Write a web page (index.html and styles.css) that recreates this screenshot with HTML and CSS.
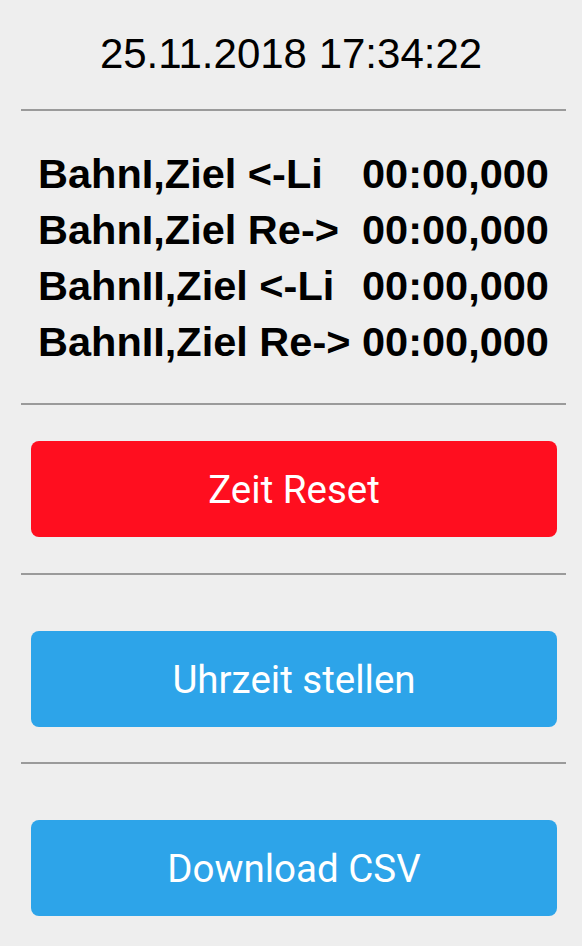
FILE: index.html
```html
<!DOCTYPE html>
<html lang="de">
<head>
<meta charset="utf-8">
<title>Zeitmessung</title>
<link rel="stylesheet" href="styles.css">
</head>
<body>
<main class="page">
  <h1 class="clock">25.11.2018 17:34:22</h1>
  <hr class="rule rule-top">
  <div class="times">
    <div class="label">BahnI,Ziel &lt;-Li</div><div class="value">00:00,000</div>
    <div class="label">BahnI,Ziel Re-&gt;</div><div class="value">00:00,000</div>
    <div class="label">BahnII,Ziel &lt;-Li</div><div class="value">00:00,000</div>
    <div class="label">BahnII,Ziel Re-&gt;</div><div class="value">00:00,000</div>
  </div>
  <hr class="rule rule-times">
  <button class="btn btn-red btn-first">Zeit Reset</button>
  <hr class="rule rule-btn">
  <button class="btn btn-blue">Uhrzeit stellen</button>
  <hr class="rule rule-btn">
  <button class="btn btn-blue">Download CSV</button>
</main>
</body>
</html>
```

FILE: styles.css
```css
html, body {
  margin: 0;
  padding: 0;
  background: #eeeeee;
}

.page {
  display: flex;
  flex-direction: column;
  font-family: "Liberation Sans", Arial, Helvetica, sans-serif;
  color: #000;
}

.clock {
  margin: 29px 0 0 0;
  font-size: 42px;
  font-weight: normal;
  line-height: 50px;
  text-align: center;
}

.rule {
  margin: 0 16px 0 21px;
  border: 0;
  border-top: 2px solid #9a9a9a;
  height: 0;
}

.rule-top {
  margin-top: 30px;
}

.times {
  margin-top: 35px;
  padding-left: 38px;
  display: grid;
  grid-template-columns: 324px auto;
  font-size: 41.5px;
  font-weight: bold;
  line-height: 56px;
  white-space: nowrap;
}

.rule-times {
  margin-top: 33px;
}

.btn {
  margin: 0 25px 0 31px;
  height: 96px;
  border: 0;
  border-radius: 8px;
  color: #fff;
  font-family: Roboto, "Liberation Sans", sans-serif;
  font-size: 38.5px;
  font-weight: normal;
  padding: 0;
}

.btn-red {
  background: #ff0e1f;
  margin-top: 36px;
  margin-bottom: 36px;
}

.btn-blue {
  background: #2da4e9;
  margin-top: 56px;
  margin-bottom: 35px;
}
```
